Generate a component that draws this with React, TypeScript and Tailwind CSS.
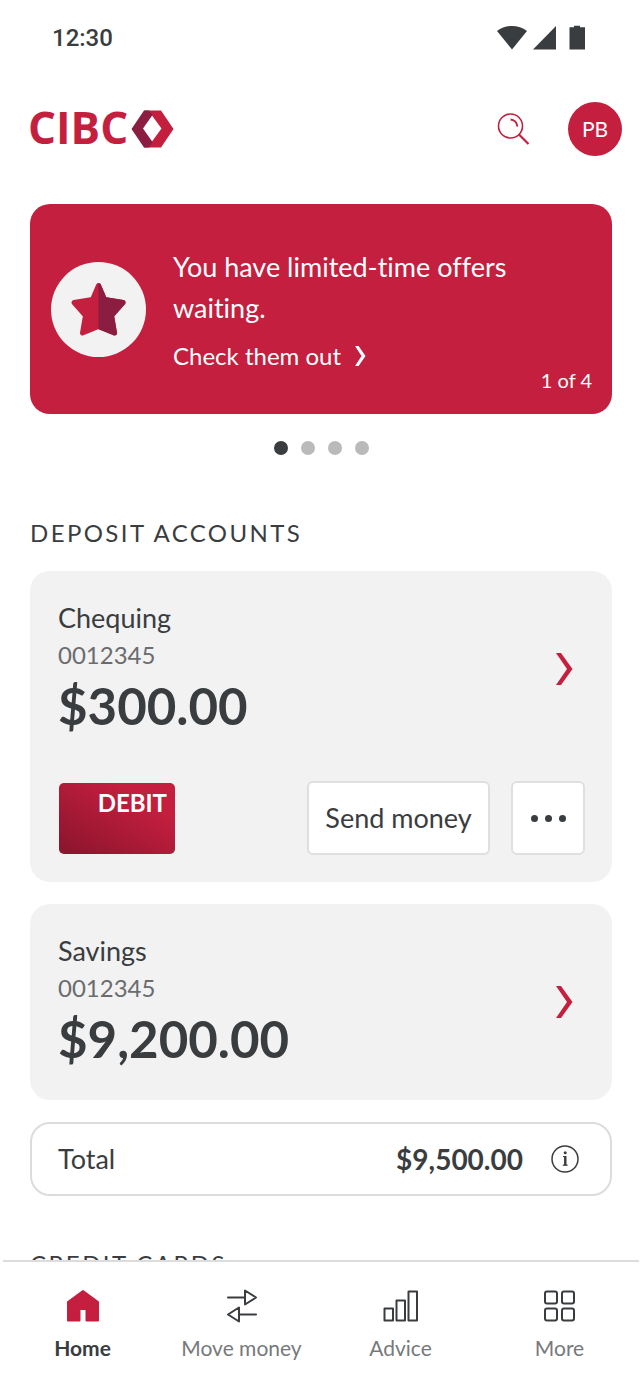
import { useState } from "react";
import type { ReactNode } from "react";

const accounts = [
  { id: 1, name: "Chequing", number: "0012345", balance: "$300.00", debit: true },
  { id: 2, name: "Savings", number: "0012345", balance: "$9,200.00", debit: false },
];

function StatusBar() {
  return (
    <div className="flex h-[76px] shrink-0 items-center justify-between pl-[52px] pr-[54px] font-['Roboto',sans-serif] text-[24px] font-medium text-[#3a3d3f]">
      <span>12:30</span>
      <svg width="90" height="26" viewBox="0 0 90 26" fill="currentColor" aria-hidden="true">
        <path d="M1 6C9.500 -.7 22.500 -.7 31 6L16 24.500Z" />
        <path d="M60 1V24.500H37Z" />
        <path d="M73.500 2.200H78V.8H84V2.200H89V24.500H73.500Z" />
      </svg>
    </div>
  );
}

function Header() {
  return (
    <header className="flex h-[106px] items-center justify-between pl-7 pr-[18px]">
      <a href="#home" className="flex items-center gap-[3px] text-[#c41f3e]" aria-label="CIBC home">
        <span className="pb-1 font-['Open_Sans',sans-serif] text-[44px] leading-[48px] font-bold">CIBC</span>
        <svg width="43" height="38" viewBox="0 0 43 38" aria-hidden="true">
          <path d="M13 .5H30L42.500 19L30 37.500H13L21 31.500L30.500 18.500L21 5.500Z" fill="#c41f3e" />
          <path d="M13 .5H18L21.500 5L12 18.500L21.500 32L18 37.500H13L.5 19Z" fill="#8b1d41" />
        </svg>
      </a>
      <div className="flex items-center gap-[38px]">
        <button type="button" aria-label="Search">
          <svg width="33" height="33" viewBox="0 0 33 33" fill="none" stroke="#c41f3e" aria-hidden="true">
            <circle cx="13.500" cy="13" r="12" strokeWidth="1.600" />
            <path d="M13.500 6.500C17 6.700 20 9.500 20.300 13.500" strokeWidth="2" />
            <path d="M22 21.500L31.500 31" strokeWidth="2.200" />
          </svg>
        </button>
        <button
          type="button"
          className="flex size-[54px] items-center justify-center rounded-full bg-[#c41f3e] text-[21px] text-white"
        >
          PB
        </button>
      </div>
    </header>
  );
}

function OfferBanner() {
  const [current, setCurrent] = useState(0);

  return (
    <section className="mt-[22px]" aria-label="Offers">
      <div className="flex min-h-[210px] items-center rounded-[20px] bg-[#c41f3e] pr-5 pl-[21px] text-white">
        <div className="flex size-[95px] shrink-0 items-center justify-center rounded-full bg-[#f2f2f2]">
          <svg width="57" height="56" viewBox="0 0 57 56" strokeWidth="5" strokeLinejoin="round" aria-hidden="true">
            <path d="M28.500 4.500L34.500 18.500L53 21.500L41.500 34.500L44.500 52L28.500 45.500L12.500 52L15.500 34.500L4 21.500L22.500 18.500Z" fill="#c41f3e" stroke="#c41f3e" />
            <svg x="28.500" width="28.500" height="56" viewBox="28.500 0 28.500 56">
              <path d="M28.500 4.500L34.500 18.500L53 21.500L41.500 34.500L44.500 52L28.500 45.500L12.500 52L15.500 34.500L4 21.500L22.500 18.500Z" fill="#8b1d41" stroke="#8b1d41" />
            </svg>
          </svg>
        </div>
        <div className="ml-[27px] min-w-0 flex-1">
          <p className="text-[27px] leading-[41px]">You have limited-time offers waiting.</p>
          <a href="#offers" className="mt-3 flex items-center gap-[14px] text-[24px] leading-8">
            Check them out
            <svg width="11" height="20" viewBox="0 0 11 20" fill="currentColor" aria-hidden="true">
              <path d="M0 0H3.600L10.500 10L3.600 20H0L6.500 10Z" />
            </svg>
          </a>
        </div>
        <span className="mb-5 shrink-0 self-end text-[20px] leading-7">1 of 4</span>
      </div>
      <div className="mt-[27px] flex justify-center gap-[13px]">
        {[0, 1, 2, 3].map((index) => (
          <button
            key={index}
            type="button"
            aria-label={`Offer ${index + 1}`}
            onClick={() => setCurrent(index)}
            className={`size-[14px] rounded-full ${index === current ? "bg-[#3a3d3f]" : "bg-[#bababa]"}`}
          />
        ))}
      </div>
    </section>
  );
}

function AccountCard({ account }) {
  return (
    <article className="rounded-[20px] bg-[#f2f2f2]">
      <a href="#account" className="flex items-center justify-between py-[27px] pr-[39px] pl-7">
        <div>
          <h3 className="text-[27px] leading-[40px]">{account.name}</h3>
          <p className="text-[24px] leading-[34px] text-[#6a6c6e]">{account.number}</p>
          <p className="text-[51px] leading-[68px] font-bold">{account.balance}</p>
        </div>
        <svg width="17" height="32" viewBox="0 0 17 32" fill="#c41f3e" aria-hidden="true">
          <path d="M0 0H5L16.500 16L5 32H0L11 16Z" />
        </svg>
      </a>
      {account.debit && (
        <div className="flex items-center justify-between pt-[14px] pr-[27px] pb-[27px] pl-[29px]">
          <div className="h-[71px] w-[116px] rounded-[5px] bg-linear-to-tr from-[#8a142d] to-[#c41f3e] to-75% pt-1 pr-2 text-right text-[24px] leading-8 font-bold text-white">
            DEBIT
          </div>
          <div className="flex gap-[21px]">
            <button
              type="button"
              className="h-[74px] w-[183px] rounded-md border-2 border-[#dfdfdf] bg-white text-[27px]"
            >
              Send money
            </button>
            <button
              type="button"
              aria-label="More options"
              className="flex size-[74px] items-center justify-center gap-[7px] rounded-md border-2 border-[#dfdfdf] bg-white"
            >
              <span className="size-[7px] rounded-full bg-[#3a3d3f]" />
              <span className="size-[7px] rounded-full bg-[#3a3d3f]" />
              <span className="size-[7px] rounded-full bg-[#3a3d3f]" />
            </button>
          </div>
        </div>
      )}
    </article>
  );
}

function TotalRow() {
  return (
    <div className="flex h-[74px] items-center rounded-[20px] border-2 border-[#dcdcdc] pr-[31px] pl-[26px] text-[27px]">
      <span>Total</span>
      <span className="ml-auto text-[28px] font-bold">$9,500.00</span>
      <button type="button" aria-label="About this total" className="ml-7">
        <svg width="28" height="28" viewBox="0 0 28 28" fill="none" stroke="#3a3d3f" aria-hidden="true">
          <circle cx="14" cy="14" r="13" strokeWidth="1.500" />
          <path d="M12 11.500H14.200V20M11.800 20.200H16.600" strokeWidth="1.200" />
          <path d="M14.300 11V20.500" strokeWidth="2.400" />
          <circle cx="14.200" cy="7.800" r="1.500" fill="#3a3d3f" stroke="none" />
        </svg>
      </button>
    </div>
  );
}

function NavItem({ label, active = false, children }: { label: string; active?: boolean; children: ReactNode }) {
  return (
    <a
      href={`#${label.toLowerCase().replace(" ", "-")}`}
      aria-current={active ? "page" : undefined}
      className={`flex flex-col items-center gap-2 text-[21px] leading-8 ${active ? "font-bold text-[#3a3d3f]" : "font-normal text-[#77797b]"}`}
    >
      <svg width="36" height="36" viewBox="0 0 36 36" fill="none" stroke="#3a3d3f" strokeWidth="2" strokeLinejoin="round" strokeLinecap="round" aria-hidden="true">
        {children}
      </svg>
      {label}
    </a>
  );
}

function BottomNav() {
  return (
    <nav className="mr-px ml-[3px] grid h-[124px] shrink-0 grid-cols-4 border-t-2 border-[#dcdcdc] bg-white pt-[26px]">
      <NavItem label="Home" active>
        <path d="M18 3L33 14V32.500H21.500V21H14.500V32.500H3V14Z" fill="#c41f3e" stroke="#c41f3e" />
      </NavItem>
      <NavItem label="Move money">
        <path d="M4 9.500H21M21 2.500V16.500L32 9.500ZM32 26.500H15M15 19.500V33.500L4 26.500Z" />
      </NavItem>
      <NavItem label="Advice">
        <path d="M1.500 20.500H10V32.500H1.500ZM13.500 12.500H22V32.500H13.500ZM25.500 3.500H34V32.500H25.500Z" />
      </NavItem>
      <NavItem label="More">
        <rect x="3" y="3.500" width="12" height="12" rx="2" />
        <rect x="20" y="3.500" width="12" height="12" rx="2" />
        <rect x="3" y="20.500" width="12" height="12" rx="2" />
        <rect x="20" y="20.500" width="12" height="12" rx="2" />
      </NavItem>
    </nav>
  );
}

export default function App() {
  return (
    <div className="flex h-screen flex-col bg-white font-['Lato',sans-serif] text-[#3a3d3f] [font-variant-ligatures:none]">
      <StatusBar />
      <main className="min-h-0 flex-1 overflow-y-auto [scrollbar-width:none]">
        <Header />
        <div className="pr-7 pb-8 pl-[30px]">
          <OfferBanner />
          <section className="mt-[60px]">
            <h2 className="mb-5 text-[24px] leading-9 tracking-widest uppercase">Deposit accounts</h2>
            <div className="flex flex-col gap-[22px]">
              {accounts.map((account) => (
                <AccountCard key={account.id} account={account} />
              ))}
              <TotalRow />
            </div>
          </section>
          <section className="mt-[50px]">
            <h2 className="text-[24px] leading-9 tracking-widest uppercase">Credit cards</h2>
          </section>
        </div>
      </main>
      <BottomNav />
    </div>
  );
}
